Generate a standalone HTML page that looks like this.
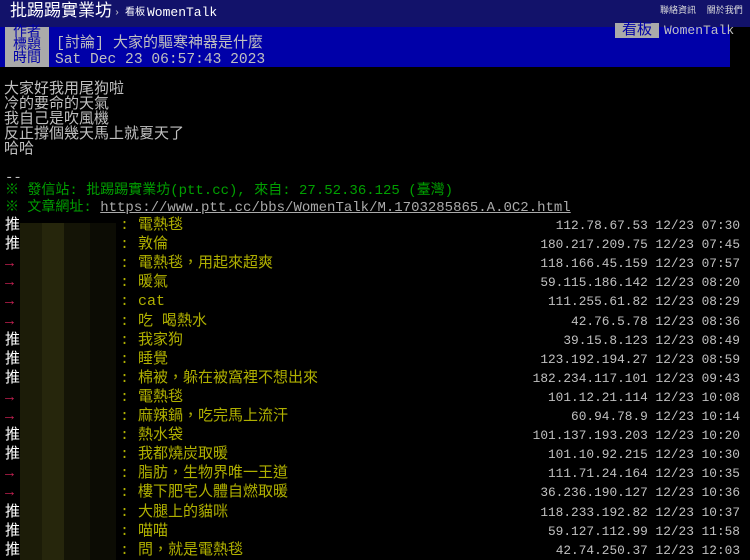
<!DOCTYPE html>
<html><head><meta charset="utf-8"><style>
body{margin:0;width:750px;height:560px;background:#000;overflow:hidden;position:relative;font-family:"Liberation Mono","Noto Sans CJK TC",monospace;color:#c0c0c0}
.a{position:absolute;white-space:pre;line-height:16px;height:16px}
#top{position:absolute;left:0;top:0;width:750px;height:27px;background:#12126a}
#meta{position:absolute;left:0;top:27px;width:730px;height:40px;background:#0000a8}
.labbg{position:absolute;left:5px;top:27px;width:44px;height:40px;background:#aaa}
.lab{position:absolute;left:5px;width:44px;color:#0000a8;font-size:14px;text-align:center;line-height:13px;height:13px;overflow:visible}
.push{position:absolute;left:0;width:750px;height:19px;font-size:15px;line-height:19px}
.push span{position:absolute;top:0;line-height:19px;height:19px}
.t{left:5px}
.c{left:120px;color:#b0b000}
.ip{right:10px;font-size:12.8px;color:#c0c0c0}
.mask{position:absolute;left:20px;top:223px;width:96px;height:337px;background:
linear-gradient(90deg,#1c1c08 0 22px,#26260c 22px 44px,#141406 44px 70px,#0c0c04 70px 96px)}
</style></head><body>
<div id="top"></div>
<div class="a" style="left:10px;top:3px;font-size:17px;line-height:20px;height:20px;color:#fff">批踢踢實業坊</div>
<div class="a" style="left:114px;top:6px;font-size:10px;color:#ccc">›</div>
<div class="a" style="left:125px;top:6px;font-size:10px;color:#fff">看板</div>
<div class="a" style="left:147px;top:5px;font-size:13px;color:#fff">WomenTalk</div>
<div class="a" style="left:660px;top:3px;font-size:9px;color:#ddd">聯絡資訊  關於我們</div>
<div id="meta"></div>
<div class="labbg"></div>
<div class="lab" style="top:27px">作者</div>
<div class="lab" style="top:40px">標題</div>
<div class="lab" style="top:53px">時間</div>
<div class="a" style="left:56px;top:36px;font-size:15px">[討論] 大家的驅寒神器是什麼</div>
<div class="a" style="left:55px;top:52px;font-size:14.6px">Sat Dec 23 06:57:43 2023</div>
<div class="a" style="left:615px;top:23px;width:44px;height:15px;line-height:15px;background:#aaa;color:#0000a8;font-size:15px;text-align:center">看板</div>
<div class="a" style="left:664px;top:23px;font-size:13px">WomenTalk</div>
<div class="a" style="left:4px;top:82px;font-size:15px">大家好我用尾狗啦</div>
<div class="a" style="left:4px;top:97px;font-size:15px">冷的要命的天氣</div>
<div class="a" style="left:4px;top:112px;font-size:15px">我自己是吹風機</div>
<div class="a" style="left:4px;top:127px;font-size:15px">反正撐個幾天馬上就夏天了</div>
<div class="a" style="left:4px;top:142px;font-size:15px">哈哈</div>
<div class="a" style="left:5px;top:170px;font-size:14px">--</div>
<div class="a" style="left:5px;top:183px;font-size:14px;color:#00a000">※ 發信站: 批踢踢實業坊(ptt.cc), 來自: 27.52.36.125 (臺灣)</div>
<div class="a" style="left:5px;top:200px;font-size:14px;color:#00a000">※ 文章網址: <span style="color:#aaa;text-decoration:underline">https://www.ptt.cc/bbs/WomenTalk/M.1703285865.A.0C2.html</span></div>
<div class="mask"></div>
<div id="pushes"></div>
<script>
var d=[["推","電熱毯","112.78.67.53 12/23 07:30"],["推","敦倫","180.217.209.75 12/23 07:45"],["→","電熱毯，用起來超爽","118.166.45.159 12/23 07:57"],["→","暖氣","59.115.186.142 12/23 08:20"],["→","cat","111.255.61.82 12/23 08:29"],["→","吃 喝熱水","42.76.5.78 12/23 08:36"],["推","我家狗","39.15.8.123 12/23 08:49"],["推","睡覺","123.192.194.27 12/23 08:59"],["推","棉被，躲在被窩裡不想出來","182.234.117.101 12/23 09:43"],["→","電熱毯","101.12.21.114 12/23 10:08"],["→","麻辣鍋，吃完馬上流汗","60.94.78.9 12/23 10:14"],["推","熱水袋","101.137.193.203 12/23 10:20"],["推","我都燒炭取暖","101.10.92.215 12/23 10:30"],["→","脂肪，生物界唯一王道","111.71.24.164 12/23 10:35"],["→","樓下肥宅人體自燃取暖","36.236.190.127 12/23 10:36"],["推","大腿上的貓咪","118.233.192.82 12/23 10:37"],["推","喵喵","59.127.112.99 12/23 11:58"],["推","問，就是電熱毯","42.74.250.37 12/23 12:03"]];
var h="";d.forEach(function(r,i){var y=216+i*19.1;h+='<div class="push" style="top:'+y+'px"><span class="t" style="color:'+(r[0]=="推"?"#fff":"#c02050")+'">'+r[0]+'</span><span class="c">: '+r[1]+'</span><span class="ip">'+r[2]+'</span></div>';});
document.getElementById("pushes").innerHTML=h;
</script>
</body></html>
